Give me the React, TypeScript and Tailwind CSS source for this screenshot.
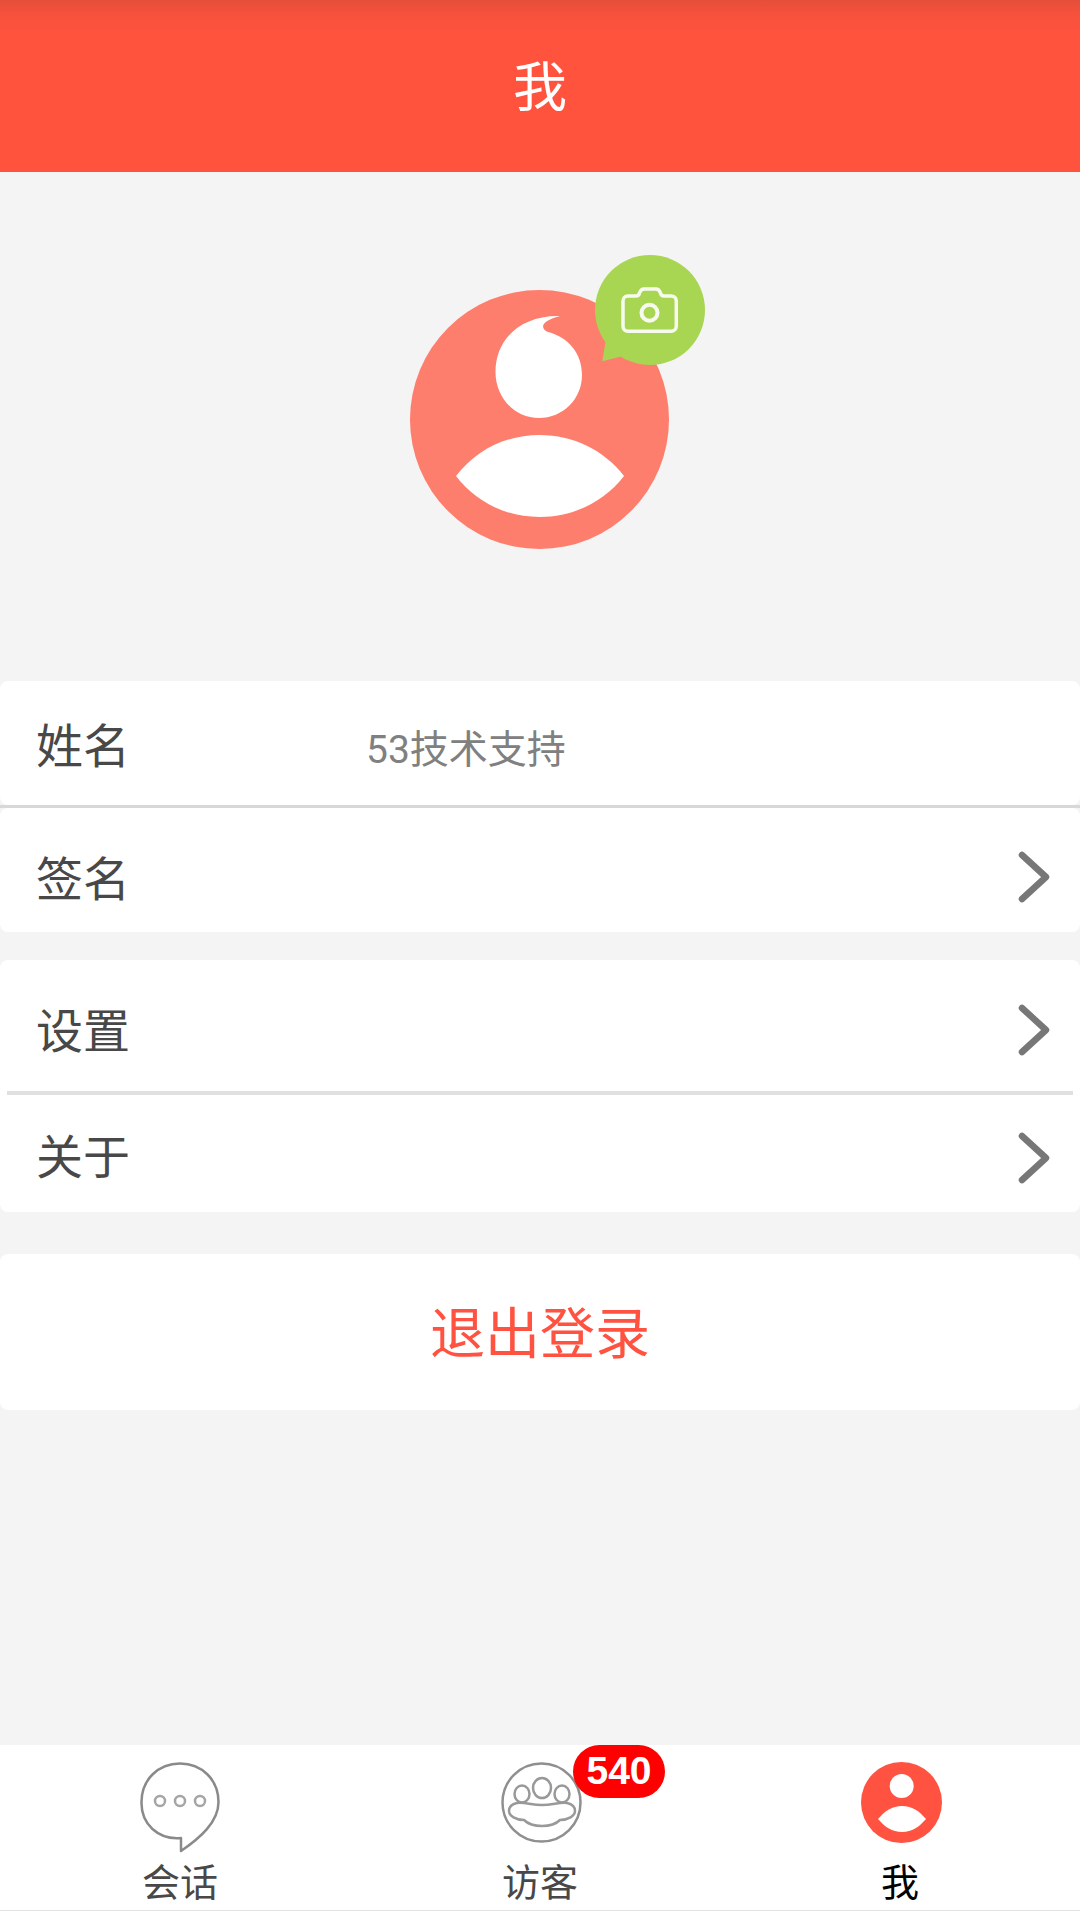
const FONT = "font-['Roboto','Noto_Sans_CJK_SC',sans-serif]";

function Chevron({ className = "" }: { className?: string }) {
  return (
    <svg width="32" height="52" viewBox="0 0 32 52" className={`shrink-0 ${className}`}>
      <polyline points="4,4 28,26 4,48" fill="none" stroke="#777777" strokeWidth="6.5" strokeLinecap="round" strokeLinejoin="round" />
    </svg>
  );
}

function Avatar() {
  return (
    <div className="relative w-[259px] h-[259px]">
      <svg width="259" height="259" viewBox="0 0 259 259" className="block">
        <circle cx="129.5" cy="129.5" r="129.5" fill="#fe7e6d" />
        <path d="M150 26 C144 27.500 134 31 133 36 C133 39 135 41 138 42 C158 47 172 63 172 85 C172 109 153 128 129 128 C105 128 85.500 108 85.500 82 C85.500 48 112 25 150 26 Z" fill="#ffffff" />
        <path d="M46 186 C66 160 96 145 129.5 145 C163 145 194 160 214 186 C194 212 163 227 129.5 227 C96 227 66 212 46 186 Z" fill="#ffffff" />
      </svg>
      <svg width="110" height="110" viewBox="0 0 110 110" className="absolute left-[185px] top-[-35px]">
        <circle cx="55" cy="55" r="55" fill="#a8d653" />
        <path d="M11 84 L7.3 106.3 L28 101 Z" fill="#a8d653" />
        <path d="M33 41 H41 C43 41 44 40 44.500 38 C45.500 35 46.500 34 49 34 H61 C63.500 34 64.500 35 65.500 38 C66 40 67 41 69 41 H76 C79 41 81.300 43 81.300 46 V71 C81.300 74 79 76.300 76 76.300 H33 C30 76.300 28 74 28 71 V46 C28 43 30 41 33 41 Z" fill="none" stroke="#ffffff" strokeWidth="3.500" strokeOpacity="0.9" />
        <circle cx="54.500" cy="57.700" r="8" fill="none" stroke="#ffffff" strokeWidth="4" strokeOpacity="0.9" />
      </svg>
    </div>
  );
}

function ChatIcon() {
  return (
    <svg width="80" height="91" viewBox="0 0 80 91" className="block">
      <path d="M41 76 C18 78 1 62 1.500 40 C1.500 18 18 1.500 40 1.500 C62 1.500 78.500 18 78.500 40 C78.500 60 60 76 41 89 Z" fill="none" stroke="#8a8a8a" strokeWidth="2.500" strokeLinejoin="round" />
      <circle cx="20" cy="39" r="5" fill="none" stroke="#a5a5a5" strokeWidth="2.500" />
      <circle cx="40" cy="39" r="5" fill="none" stroke="#a5a5a5" strokeWidth="2.500" />
      <circle cx="60" cy="39" r="5" fill="none" stroke="#a5a5a5" strokeWidth="2.500" />
    </svg>
  );
}

function VisitorIcon() {
  return (
    <svg width="81" height="81" viewBox="0 0 81 81" className="block">
      <circle cx="40.500" cy="40.500" r="39" fill="none" stroke="#8f8f8f" strokeWidth="2.500" />
      <ellipse cx="41" cy="26" rx="9" ry="10" fill="none" stroke="#999999" strokeWidth="2.500" />
      <ellipse cx="21" cy="32" rx="7.500" ry="8.500" fill="none" stroke="#999999" strokeWidth="2.500" />
      <ellipse cx="61" cy="32" rx="7.500" ry="8.500" fill="none" stroke="#999999" strokeWidth="2.500" />
      <path d="M16 41 C24 40 30 43 41 43 C52 43 58 40 66 41 C71 42 74 45 74 49 C74 54 67 58 59 58 C55 62 48 64 41 64 C34 64 27 62 23 58 C15 58 8 54 8 49 C8 45 11 42 16 41 Z" fill="none" stroke="#999999" strokeWidth="2.500" />
    </svg>
  );
}

function MeIcon() {
  return (
    <svg width="81" height="81" viewBox="0 0 81 81" className="block">
      <circle cx="40.500" cy="40.500" r="40.500" fill="#ff5240" />
      <circle cx="40.700" cy="24" r="12" fill="#ffffff" />
      <path d="M17 57 C24 49 31 44 41 44 C51 44 58 49 65 57 C58 65 51 70 41 70 C31 70 24 65 17 57 Z" fill="#ffffff" />
    </svg>
  );
}

export default function App() {
  return (
    <div className={`${FONT} flex flex-col w-[1080px] h-[1920px] bg-[#f4f4f4] overflow-hidden`}>
      <header className="h-[172px] shrink-0 flex items-center justify-center pt-[4px] bg-[linear-gradient(#e54e39,#f6513c_14px,#ff533e_34px)] text-white text-[54px]">
        我
      </header>

      <div className="h-[509px] shrink-0 flex justify-center pt-[118px] pr-[2px]">
        <Avatar />
      </div>

      <section className="flex flex-col text-[47px] text-[#484848]">
        <div className="h-[124px] flex items-center pl-[36px] pt-[8px] bg-white rounded-[8px]">
          <span className="w-[330px]">姓名</span>
          <span className="text-[#808080] text-[39px] pt-[7px]">53技术支持</span>
        </div>
        <div className="h-[3px] bg-[#d8d8d8]" />
        <div className="h-[124px] flex items-center justify-between pl-[36px] pr-[30px] pt-[14px] bg-white rounded-[8px]">
          <span className="pt-[6px]">签名</span>
          <Chevron />
        </div>
      </section>

      <section className="mt-[28px] bg-white rounded-[8px] flex flex-col text-[#484848] text-[47px]">
        <div className="h-[131px] flex items-center justify-between pl-[36px] pr-[30px] pt-[14px]">
          <span>设置</span>
          <Chevron className="mb-[5px]" />
        </div>
        <div className="h-[4px] mx-[7px] bg-[#e0e0e0]" />
        <div className="h-[117px] flex items-center justify-between pl-[36px] pr-[30px] pt-[10px]">
          <span>关于</span>
          <Chevron className="mb-[2px]" />
        </div>
      </section>

      <div className="mt-[42px] h-[156px] flex items-center justify-center pt-[4px] bg-white rounded-[8px] text-[#ff5240] text-[55px]">
        退出登录
      </div>

      <nav className="mt-auto h-[175px] bg-white">
        <div className="h-[166px] grid grid-cols-3 border-b border-[#e2e2e2]">
          <div className="flex flex-col items-center pt-[17px]">
            <ChatIcon />
            <span className="mt-[5px] text-[38px] leading-[50px] text-[#484848]">会话</span>
          </div>
          <div className="relative flex flex-col items-center pt-[17px]">
            <div className="pl-[3px]">
              <VisitorIcon />
            </div>
            <span className="mt-[15px] text-[38px] leading-[50px] text-[#484848]">访客</span>
            <span className="absolute left-[213px] top-0 w-[92px] h-[53px] flex items-center justify-center rounded-full bg-[#ff0000] text-white text-[39px] font-bold font-['Liberation_Sans',sans-serif]">
              540
            </span>
          </div>
          <div className="flex flex-col items-center pt-[17px]">
            <div className="pl-[2px]">
              <MeIcon />
            </div>
            <span className="mt-[15px] text-[38px] leading-[50px] text-black">我</span>
          </div>
        </div>
      </nav>
    </div>
  );
}
